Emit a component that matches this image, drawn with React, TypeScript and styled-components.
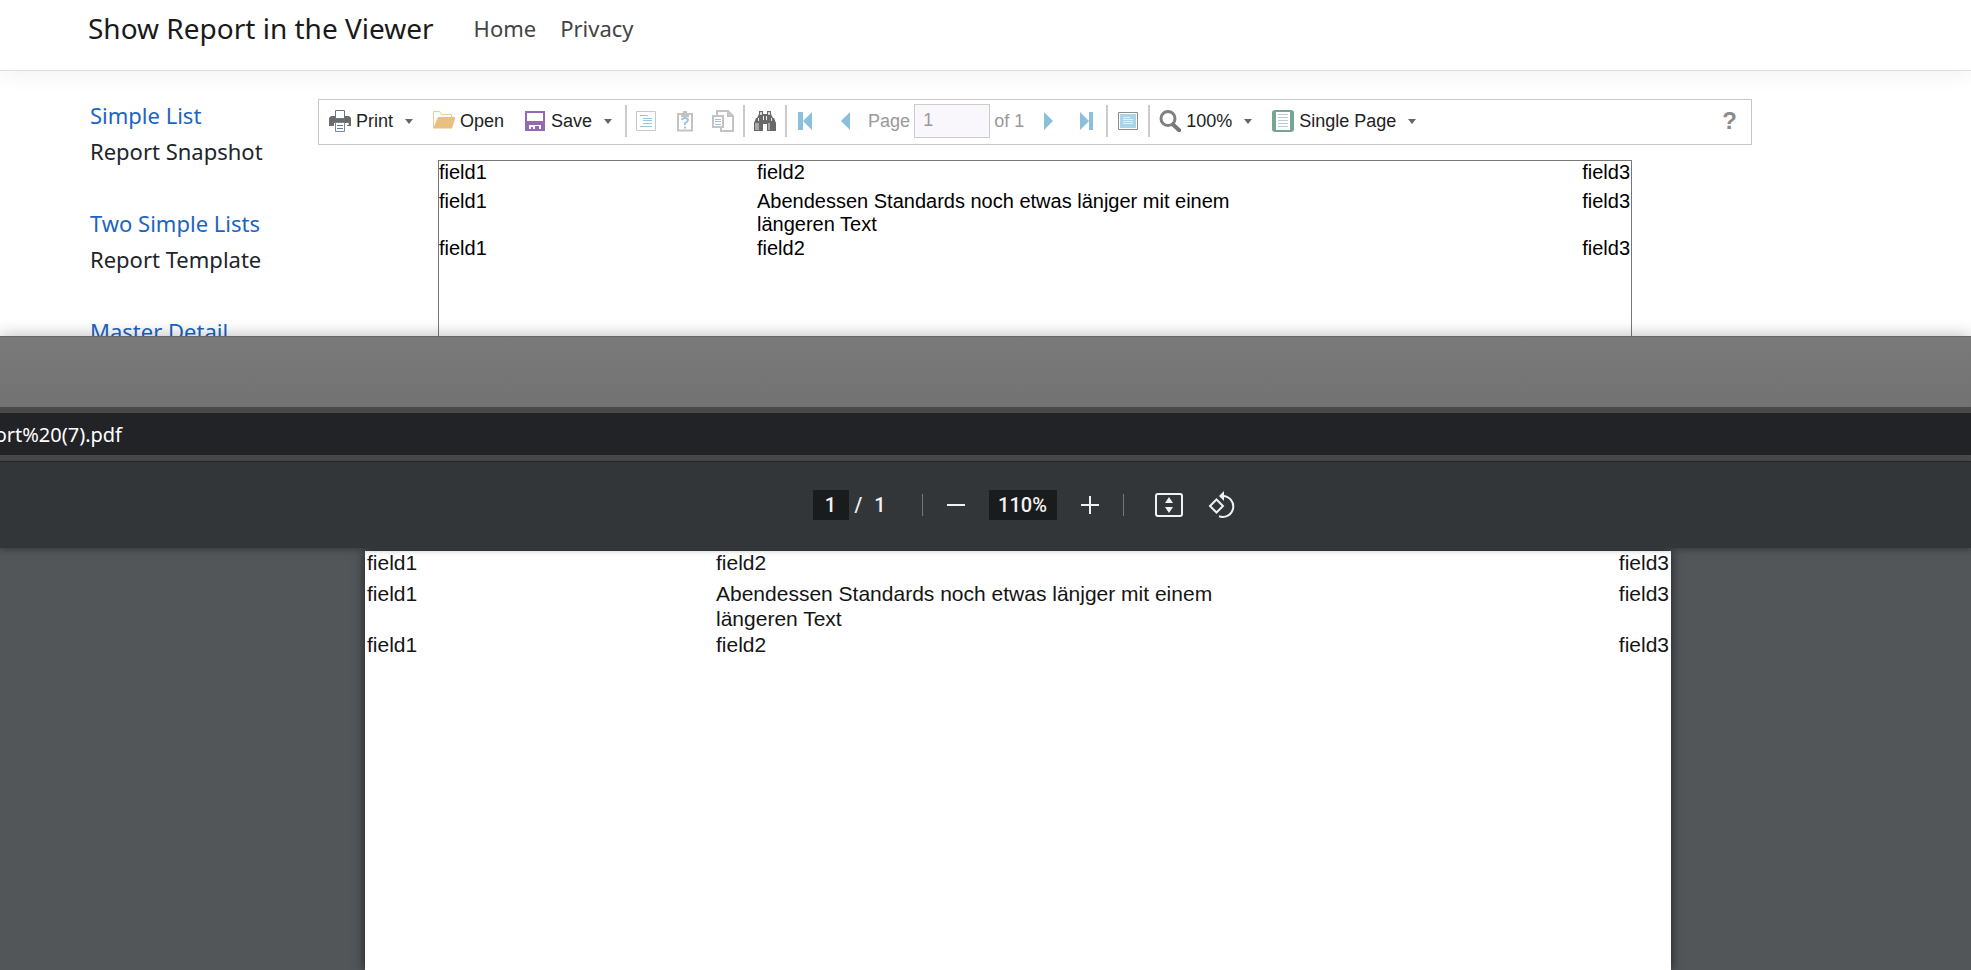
import React from "react";
import styled, { createGlobalStyle } from "styled-components";

const GlobalStyle = createGlobalStyle`
  *, *::before, *::after { box-sizing: border-box; }
  body { margin: 0; background: #fff; }
  button, input { font: inherit; color: inherit; }
`;

const Screen = styled.div`
  display: flex;
  flex-direction: column;
  height: 100vh;
  overflow: hidden;
`;

const Site = styled.div`
  flex: none;
  height: 336px;
  overflow: hidden;
  font-family: "Noto Sans", "Segoe UI", sans-serif;
  color: #212529;
`;

const SiteHeader = styled.header`
  display: flex;
  align-items: center;
  gap: 24px;
  height: 71px;
  padding: 0 88px 14px;
  border-bottom: 1px solid #e0e0e0;
  box-shadow: 0 4px 20px rgba(0, 0, 0, 0.06);
`;

const Brand = styled.a`
  margin-right: 16px;
  font-size: 28px;
  line-height: 40px;
  color: #1a1a1a;
  text-decoration: none;
`;

const NavLink = styled.a`
  font-size: 22px;
  line-height: 36px;
  color: #444;
  text-decoration: none;
`;

const SiteBody = styled.div`
  display: flex;
  padding: 26px 219px 0 90px;
`;

const Sidebar = styled.nav`
  flex: none;
  width: 228px;
  font-size: 22px;
  line-height: 36px;
`;

const Sample = styled.div`
  margin-bottom: 36px;
`;

const SampleLink = styled.a`
  display: block;
  color: #1b64c4;
  text-decoration: none;
`;

const Viewer = styled.main`
  flex: 1;
  min-width: 0;
  padding-top: 2px;
  font-family: "Liberation Sans", Arial, sans-serif;
`;

const Toolbar = styled.div`
  display: flex;
  align-items: center;
  height: 46px;
  padding: 0 2px 2px;
  border: 1px solid #c6c6c6;
  font-size: 18px;
  line-height: 24px;
  color: #222;
  white-space: nowrap;
`;

const ToolButton = styled.button<{ $labelled?: boolean }>`
  display: flex;
  align-items: center;
  gap: 5px;
  height: 34px;
  margin: 0 ${(p) => (p.$labelled ? "4px" : "0")} 0 0;
  padding: 0 8px;
  border: 0;
  background: none;
`;

const Caret = styled.span`
  margin-left: 7px;
  border: 4px solid transparent;
  border-top: 5px solid #666;
  border-bottom: 0;
`;

const Divider = styled.span`
  width: 2px;
  height: 32px;
  margin: 0 1px;
  background: #cbcbcb;
`;

const Pager = styled.label`
  display: flex;
  align-items: center;
  gap: 4px;
  margin: 0 5px 0 4px;
  color: #999;
`;

const PagerInput = styled.input`
  width: 76px;
  height: 34px;
  padding: 0 8px 2px;
  border: 1px solid #ccc;
  background: #f9f7fb;
  color: #999;
`;

const HelpButton = styled.button`
  margin-left: auto;
  padding: 0 12px;
  border: 0;
  background: none;
  font-size: 24px;
  font-weight: 700;
  color: #8c8c8c;
`;

const ReportTable = styled.table<{ $pdf?: boolean }>`
  width: 100%;
  table-layout: fixed;
  border-collapse: collapse;
  font-size: ${(p) => (p.$pdf ? 21 : 20)}px;
  line-height: ${(p) => (p.$pdf ? 25 : 23)}px;
  color: ${(p) => (p.$pdf ? "#151515" : "#000")};
  td {
    padding: 0 ${(p) => (p.$pdf ? "2px" : "1px 0 0")};
    vertical-align: top;
  }
  td:first-child { width: ${(p) => (p.$pdf ? 349 : 318)}px; }
  td:nth-child(2) { width: 520px; }
  td:last-child { text-align: right; }
  tr:first-child td {
    padding-bottom: ${(p) => (p.$pdf ? 7 : 6)}px;
    line-height: 23px;
  }
  tr:nth-child(2) td { padding-bottom: 1px; }
`;

const ReportPage = styled.div`
  height: 400px;
  margin: 15px 120px 0;
  border: 1px solid #777;
`;

const Browser = styled.section`
  position: relative;
  flex: 1;
  display: flex;
  flex-direction: column;
  min-height: 0;
  box-shadow: 0 0 16px rgba(0, 0, 0, 0.28);
`;

const TitleStrip = styled.div`
  flex: none;
  height: 71px;
  border-top: 1px solid #686868;
  background: linear-gradient(#7a7a7a, #727272);
`;

const AddressRow = styled.div`
  flex: none;
  padding: 6px 0;
  background: #494949;
`;

const Address = styled.div`
  height: 42px;
  background: #222327;
  overflow: hidden;
`;

const AddressText = styled.div`
  display: flex;
  justify-content: flex-end;
  width: 122px;
  font: 20px/44px "Noto Sans", "Segoe UI", sans-serif;
  color: #fff;
`;

const PdfToolbar = styled.div`
  position: relative;
  flex: none;
  display: flex;
  align-items: center;
  justify-content: center;
  height: 87px;
  padding: 0 0 0 85px;
  border-top: 1px solid #262829;
  background: #323639;
  box-shadow: 0 2px 6px rgba(0, 0, 0, 0.3);
  font: 500 20px/30px Roboto, sans-serif;
  color: #f1f1f1;
`;

const PdfField = styled.input<{ $wide?: boolean }>`
  width: ${(p) => (p.$wide ? 68 : 36)}px;
  height: 30px;
  margin: 0 ${(p) => (p.$wide ? 11 : 0)}px;
  padding: 0;
  border: 0;
  background: #191b1c;
  text-align: center;
`;

const PageTotal = styled.span`
  display: flex;
  gap: 12px;
  width: 62px;
  padding-left: 6px;
`;

const PdfDivider = styled.span`
  width: 1px;
  height: 22px;
  margin: 0 11px;
  background: #75787a;
`;

const PdfButton = styled.button`
  display: flex;
  align-items: center;
  justify-content: center;
  width: 44px;
  height: 44px;
  margin: 0;
  padding: 0;
  border: 0;
  background: none;
`;

const PageTools = styled.div`
  display: flex;
  gap: 9px;
  margin-left: 12px;
`;

const PdfCanvas = styled.div`
  flex: 1;
  min-height: 0;
  display: flex;
  padding: 3px 300px 0 365px;
  background: #525659;
`;

const PdfPage = styled.div`
  flex: 1;
  min-width: 0;
  background: #fff;
  box-shadow: 0 0 10px rgba(0, 0, 0, 0.65);
  font-family: "Liberation Sans", Arial, sans-serif;
`;

const Icon = ({ children }: { children: React.ReactNode }) => (
  <svg width="22" height="22" viewBox="0 0 22 22" fill="none" aria-hidden="true">
    {children}
  </svg>
);

const PrintIcon = () => (
  <Icon>
    <path d="M2 6h18l2 2v8h-4v-3H5v3H0V8z" fill="#6b6b6b" />
    <path d="M6.500 8V.5h9V8" fill="#fff" stroke="#6a7480" />
    <path d="M6 8.500h10" stroke="#5680ac" />
    <path d="M6.500 12.500h9v9h-9z" fill="#fff" stroke="#7d8791" />
    <path d="M8 15.500h6M8 18.500h6" stroke="#5680ac" />
    <circle cx="18.500" cy="14" r="1.300" fill="#fff" />
  </Icon>
);

const OpenIcon = () => (
  <Icon>
    <path d="M.5 18V1.500h6l2 3h10v3" stroke="#eecb98" />
    <path d="M5 7h17.500L19 18.500H0z" fill="#e8c182" />
  </Icon>
);

const SaveIcon = () => (
  <Icon>
    <path d="M1 1h20v20H1z" fill="#9468b2" />
    <path d="M3 3h16v8H3zM5 15h12v4h-2v-3h-4v3H9v-2H7v2H5z" fill="#fff" />
  </Icon>
);

const BookmarksIcon = () => (
  <Icon>
    <path d="M.5 1.500h19v19H.5z" stroke="#c6c9cc" />
    <path d="M4 5.500h8M7 8.500h9M7 10.500h9M7 13.500h9M4 16.500h12" stroke="#9bc5da" />
  </Icon>
);

const ParametersIcon = () => (
  <Icon>
    <path d="M4 4h14v16.500H4z" stroke="#c3c3c3" strokeWidth="2" />
    <path d="M7 3h2V1h4v2h2v4H7z" fill="#c3c3c3" />
    <path d="M8 10q.3-2 3-2t3 2q0 1.500-3 3v2M11 16.500v2" stroke="#9bc5e0" strokeWidth="2" />
  </Icon>
);

const ResourcesIcon = () => (
  <Icon>
    <path d="M5 5V1h11l5 5v15H9v-3" stroke="#c3c3c3" strokeWidth="2" />
    <path d="M15 1v6h6z" fill="#c3c3c3" />
    <path d="M1 6h10v11H1z" fill="#fff" stroke="#c3c3c3" strokeWidth="2" />
    <path d="M3 9.500h6M3 11.500h6M3 14.500h6" stroke="#9bc5e0" />
  </Icon>
);

const FindIcon = () => (
  <Icon>
    <path d="M5 1h4v3h4V1h4v3l2 4h1l2 5v8h-9v-7H9v7H0v-8l2-5h1l2-4z" fill="#686868" />
    <path d="M6.500 2.500h1v2h-1zM14.500 2.500h1v2h-1zM9.500 6v4M12.500 6v4M4.500 8v3M17.500 8v3M2 13v7M4 13v7M15 13v7" stroke="#e8e8e8" />
  </Icon>
);

const FirstIcon = () => (
  <Icon>
    <path d="M2 2h5v18H2zM7 11l9-9v18z" fill="#8cbfdc" />
  </Icon>
);
const PrevIcon = () => (
  <Icon>
    <path d="M7 11l9-9v18z" fill="#8cbfdc" />
  </Icon>
);
const NextIcon = () => (
  <Icon>
    <path d="M16 11L7 2v18z" fill="#8cbfdc" />
  </Icon>
);
const LastIcon = () => (
  <Icon>
    <path d="M14 2h4v18h-4zM14 11L5 2v18z" fill="#8cbfdc" />
  </Icon>
);

const FullScreenIcon = () => (
  <Icon>
    <path d="M1.500 2.500h19v17h-19z" fill="#fff" stroke="#8c8c8c" />
    <path d="M3 4h16v14H3z" fill="#a9d5ea" />
    <path d="M6 7.500h7M6 9.500h10M6 11.500h10M6 13.500h10" stroke="#dff0f8" />
  </Icon>
);

const ZoomIcon = () => (
  <Icon>
    <circle cx="9" cy="8.500" r="7" stroke="#808080" strokeWidth="3" />
    <path d="M13.500 14l8 7.500" stroke="#777" strokeWidth="4" />
  </Icon>
);

const SinglePageIcon = () => (
  <Icon>
    <rect width="22" height="22" rx="3" fill="#76a592" />
    <path d="M4 2h14v18H4z" fill="#fff" />
    <path d="M6 4.500h10M6 7.500h10M6 10.500h10M6 13.500h10M6 16.500h10" stroke="#bccbdc" />
  </Icon>
);

const LONG_TEXT = "Abendessen Standards noch etwas länjger mit einem längeren Text";
const ROWS = [
  ["field1", "field2", "field3"],
  ["field1", LONG_TEXT, "field3"],
  ["field1", "field2", "field3"],
];

const Report = ({ pdf }: { pdf?: boolean }) => (
  <ReportTable $pdf={pdf}>
    <tbody>
      {ROWS.map(([first, second, third], i) => (
        <tr key={i}>
          <td>{first}</td>
          <td>{second}</td>
          <td>{third}</td>
        </tr>
      ))}
    </tbody>
  </ReportTable>
);

const SAMPLES = [
  ["Simple List", "Report Snapshot"],
  ["Two Simple Lists", "Report Template"],
  ["Master Detail", ""],
];

export default function App() {
  return (
    <>
      <GlobalStyle />
      <Screen>
        <Site>
          <SiteHeader>
            <Brand href="#">Show Report in the Viewer</Brand>
            <NavLink href="#home">Home</NavLink>
            <NavLink href="#privacy">Privacy</NavLink>
          </SiteHeader>
          <SiteBody>
            <Sidebar>
              {SAMPLES.map(([name, kind]) => (
                <Sample key={name}>
                  <SampleLink href="#sample">{name}</SampleLink>
                  {kind}
                </Sample>
              ))}
            </Sidebar>
            <Viewer>
              <Toolbar>
                <ToolButton $labelled><PrintIcon />Print<Caret /></ToolButton>
                <ToolButton $labelled><OpenIcon />Open</ToolButton>
                <ToolButton $labelled><SaveIcon />Save<Caret /></ToolButton>
                <Divider />
                <ToolButton aria-label="Bookmarks"><BookmarksIcon /></ToolButton>
                <ToolButton aria-label="Parameters"><ParametersIcon /></ToolButton>
                <ToolButton aria-label="Resources"><ResourcesIcon /></ToolButton>
                <Divider />
                <ToolButton aria-label="Find"><FindIcon /></ToolButton>
                <Divider />
                <ToolButton aria-label="First page"><FirstIcon /></ToolButton>
                <ToolButton aria-label="Previous page"><PrevIcon /></ToolButton>
                <Pager>
                  Page
                  <PagerInput defaultValue="1" />
                  of 1
                </Pager>
                <ToolButton aria-label="Next page"><NextIcon /></ToolButton>
                <ToolButton aria-label="Last page"><LastIcon /></ToolButton>
                <Divider />
                <ToolButton aria-label="Full screen"><FullScreenIcon /></ToolButton>
                <Divider />
                <ToolButton $labelled><ZoomIcon />100%<Caret /></ToolButton>
                <ToolButton $labelled><SinglePageIcon />Single Page<Caret /></ToolButton>
                <HelpButton>?</HelpButton>
              </Toolbar>
              <ReportPage>
                <Report />
              </ReportPage>
            </Viewer>
          </SiteBody>
        </Site>
        <Browser>
          <TitleStrip />
          <AddressRow>
            <Address>
              <AddressText>ort%20(7).pdf</AddressText>
            </Address>
          </AddressRow>
          <PdfToolbar>
            <PdfField aria-label="Page number" defaultValue="1" />
            <PageTotal><span>/</span><span>1</span></PageTotal>
            <PdfDivider />
            <PdfButton aria-label="Zoom out">
              <svg width="18" height="18" viewBox="0 0 18 18" aria-hidden="true">
                <path d="M0 8h18v2H0z" fill="#f1f1f1" />
              </svg>
            </PdfButton>
            <PdfField $wide aria-label="Zoom" defaultValue="110%" />
            <PdfButton aria-label="Zoom in">
              <svg width="18" height="18" viewBox="0 0 18 18" aria-hidden="true">
                <path d="M0 8h8V0h2v8h8v2h-8v8H8v-8H0z" fill="#f1f1f1" />
              </svg>
            </PdfButton>
            <PdfDivider />
            <PageTools>
              <PdfButton aria-label="Fit to page">
                <svg width="28" height="24" viewBox="0 0 28 24" fill="none" aria-hidden="true">
                  <rect x="1" y="1" width="26" height="22" rx="2" stroke="#f1f1f1" strokeWidth="2" />
                  <path d="M14 4l4 6h-8zM14 20l4-6h-8z" fill="#f1f1f1" />
                </svg>
              </PdfButton>
              <PdfButton aria-label="Rotate">
                <svg width="28" height="28" viewBox="0 0 28 28" fill="none" aria-hidden="true">
                  <path d="M8.500 8.500l6.500 6.500-6.500 6.500L2 15z" stroke="#f1f1f1" strokeWidth="2" />
                  <path d="M15 5a10.500 10.500 0 1 1-4 20.300" stroke="#f1f1f1" strokeWidth="2" />
                  <path d="M16 0v10L11 5z" fill="#f1f1f1" />
                </svg>
              </PdfButton>
            </PageTools>
          </PdfToolbar>
          <PdfCanvas>
            <PdfPage>
              <Report pdf />
            </PdfPage>
          </PdfCanvas>
        </Browser>
      </Screen>
    </>
  );
}
